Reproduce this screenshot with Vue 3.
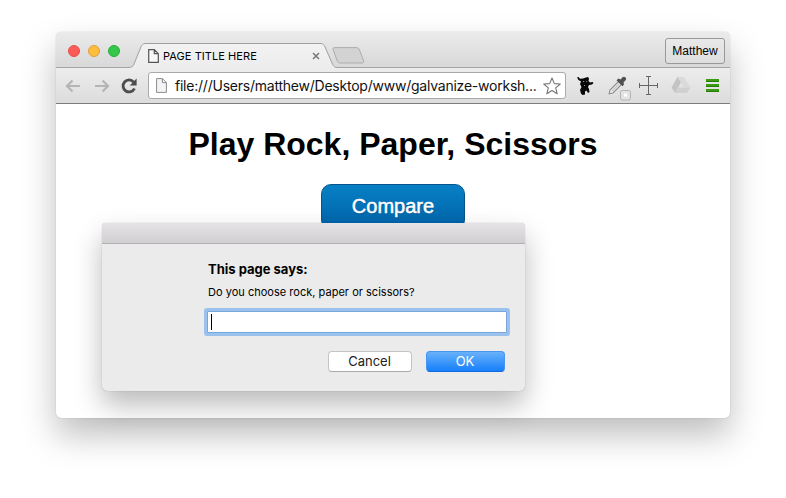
<script setup>
import { ref } from 'vue'

const tabTitle = 'PAGE TITLE HERE'
const address = 'file:///Users/matthew/Desktop/www/galvanize-worksh...'
const answer = ref('')
</script>

<template>
  <main class="desktop">
    <section class="window">
      <header class="tab-strip">
        <div class="lights">
          <span class="light red"></span>
          <span class="light yellow"></span>
          <span class="light green"></span>
        </div>
        <div class="tab">
          <svg class="tab-shape" width="212" height="25" viewBox="0 0 212 25">
            <defs>
              <linearGradient id="tabFill" x1="0" y1="0" x2="0" y2="1">
                <stop offset="0" stop-color="#f2f2f2" />
                <stop offset="1" stop-color="#ededed" />
              </linearGradient>
            </defs>
            <path d="M0 25V24.5C4 24.3 5 23.5 6 21L12.500 5C14 1.500 15 .5 18 .5H192C195 .5 196 1.500 197.500 5L204 20C205.500 23.500 206.500 24.500 210 24.500V25Z" fill="url(#tabFill)" />
            <path d="M0 24.5C4 24.3 5 23.5 6 21L12.500 5C14 1.500 15 .5 18 .5H192C195 .5 196 1.500 197.500 5L204 20C205.500 23.500 206.500 24.500 210 24.500" fill="none" stroke="#a0a0a0" />
          </svg>
          <svg class="tab-page" width="11" height="14" viewBox="0 0 11 14">
            <path d="M.7.7H6.300L10.300 4.700V13.300H.7ZM6.300.7V4.700H10.300" fill="#f8f8f8" stroke="#555" stroke-width="1.200" />
          </svg>
          <span class="tab-title">{{ tabTitle }}</span>
          <svg class="tab-close" width="8" height="8" viewBox="0 0 8 8">
            <path d="M1 1L7 7M7 1L1 7" stroke="#777" stroke-width="1.500" />
          </svg>
        </div>
        <svg class="new-tab" width="34" height="17" viewBox="0 0 34 17">
          <path d="M3 .6H24C26 .6 26.800 1.200 27.500 3L31.300 13C32 15 31.700 16 30 16H9C7 16 6 15.500 5.300 14L1.200 3C.6 1.300 1 .6 3 .6Z" fill="#d3d3d3" stroke="#adadad" />
        </svg>
        <button class="profile">Matthew</button>
      </header>

      <nav class="toolbar">
        <svg class="back" width="16" height="14" viewBox="0 0 16 14">
          <path d="M15 7H2M7.500 1.500L2 7L7.500 12.500" fill="none" stroke="#b5b5b5" stroke-width="2.200" />
        </svg>
        <svg class="forward" width="16" height="14" viewBox="0 0 16 14">
          <path d="M1 7H14M8.500 1.500L14 7L8.500 12.500" fill="none" stroke="#b5b5b5" stroke-width="2.200" />
        </svg>
        <svg class="reload" width="16" height="16" viewBox="0 0 16 16">
          <path d="M12.600 4A6 6 0 1 0 13.500 10.500" fill="none" stroke="#4d4d4d" stroke-width="2.800" />
          <path d="M15.600.6V7.400H8.800Z" fill="#4d4d4d" />
        </svg>
        <div class="address">
          <svg class="address-page" width="11" height="15" viewBox="0 0 11 15">
            <path d="M.6.600H6.400L10.400 4.600V14.400H.6ZM6.400.6V4.600H10.400" fill="#f4f4f4" stroke="#8b8b8b" />
          </svg>
          <span class="address-text">{{ address }}</span>
          <svg class="star" width="18" height="18" viewBox="0 0 18 18">
            <path d="M9 1L11.300 6.600L17.300 7L12.700 10.900L14.200 16.800L9 13.500L3.800 16.800L5.300 10.900L.7 7L6.700 6.600Z" fill="#fff" stroke="#777" stroke-width="1.100" stroke-linejoin="round" />
          </svg>
        </div>
        <svg class="creature" width="18" height="20" viewBox="0 0 18 20">
          <path d="M0 1.500L1.500 1L3 2.800L6 2.500L9 1.500L11 1L12 2.500L11.500 5L13 6.500L15.500 6L16.500 7L15 8.500L12 9L11 11L12 13L12.500 16L11 17L9.500 14.500L8 15.500L8 18.500L5.500 19L4 17.500L3 14L4.500 11L3 8L4 5.500L1.500 4Z" fill="#080808" />
          <path d="M6 5.500H7.200M9.300 5.500H10.200M7 9.500H8" stroke="#bbb" stroke-width=".8" />
        </svg>
        <svg class="dropper" width="24" height="25" viewBox="0 0 24 25">
          <path d="M1.200 17.800L2 14L10.500 5.500L13.500 8.500L5 17Z" fill="#eee" stroke="#8c8c8c" stroke-width="1.100" />
          <path d="M4 15L11 8" stroke="#c6c6c6" stroke-width="1.300" />
          <path d="M8.500 4.300L10.500 2.500L12.500 3.500L14.500 1.200C16.500-.4 19 1.800 17.800 4L15.500 6.500L16 8.500L14.500 10.200Z" fill="#505050" />
          <rect x="12.500" y="14.500" width="10" height="9.500" rx="1.800" fill="#e3e3e3" stroke="#b3b3b3" />
          <rect x="16" y="17.500" width="3" height="3" fill="#fff" />
        </svg>
        <svg class="crosshair" width="19" height="19" viewBox="0 0 19 19">
          <path d="M9.500 .5V18.500M.5 9.500H18.500M7 .5H12M7 18.500H12M.5 7V12M18.500 7V12" fill="none" stroke="#666" />
        </svg>
        <svg class="drive" width="20" height="17" viewBox="0 0 20 17">
          <path d="M6.500 0H13L8 9L4 16L.5 10.500Z" fill="#c4c4c4" />
          <path d="M6.500 0H13L19.500 10.500H13Z" fill="#dadada" />
          <path d="M7.300 10.500H19.500L16 16H4Z" fill="#d0d0d0" />
        </svg>
        <span class="menu">
          <i></i><i></i><i></i>
        </span>
      </nav>

      <article class="page">
        <h1>Play Rock, Paper, Scissors</h1>
        <button class="compare">Compare</button>
      </article>
    </section>

    <section class="dialog" role="dialog">
      <div class="dialog-bar"></div>
      <div class="dialog-body">
        <strong>This page says:</strong>
        <label for="answer">Do you choose rock, paper or scissors?</label>
        <div class="field">
          <span class="caret"></span>
          <input id="answer" v-model="answer" type="text" />
        </div>
        <div class="actions">
          <button class="cancel">Cancel</button>
          <button class="ok">OK</button>
        </div>
      </div>
    </section>
  </main>
</template>

<style>
body {
  background: #fff;
}
</style>

<style scoped>
* {
  box-sizing: border-box;
}
svg {
  display: block;
  flex: none;
}
button {
  padding: 0;
  margin: 0;
  flex: none;
}
.desktop {
  position: relative;
  width: 786px;
  height: 498px;
  padding: 32px 56px 80px;
  overflow: hidden;
  background: #fff;
  font-family: Inter, "Liberation Sans", sans-serif;
  color: #111;
}
.window {
  width: 674px;
  height: 386px;
  border-radius: 5px;
  background: #fff;
  box-shadow: 0 0 1px rgba(0, 0, 0, 0.35), 0 17px 34px rgba(0, 0, 0, 0.26);
}
.tab-strip {
  display: flex;
  height: 36px;
  border-radius: 5px 5px 0 0;
  border-bottom: 1px solid #a4a4a4;
  background: linear-gradient(#ebebeb, #d8d8d8);
}
.lights {
  display: flex;
  gap: 8px;
  width: 74px;
  padding: 13px 0 0 12px;
}
.light {
  width: 12px;
  height: 12px;
  border-radius: 50%;
}
.red {
  background: #fc5b57;
  border: 1px solid #e2504c;
}
.yellow {
  background: #fdbd3e;
  border: 1px solid #dfa03a;
}
.green {
  background: #34c84a;
  border: 1px solid #26ad38;
}
.tab {
  position: relative;
  display: flex;
  align-items: center;
  width: 202px;
  height: 25px;
  margin-top: 11px;
  padding-left: 18px;
}
.tab-shape {
  position: absolute;
  left: -2px;
  top: 0;
}
.tab-page,
.tab-title,
.tab-close {
  position: relative;
}
.tab-title {
  width: 149px;
  margin-left: 4px;
  font-size: 11px;
  letter-spacing: 0.06px;
  line-height: 14px;
  white-space: nowrap;
  color: #000;
}
.new-tab {
  margin-top: 15px;
}
.profile {
  width: 60px;
  height: 26px;
  margin: 6px 5px 0 auto;
  border: 1px solid #999;
  border-radius: 3px;
  background: linear-gradient(#e9e9e9, #dedede);
  font: 12px/25px "Liberation Sans", sans-serif;
  color: #000;
}
.toolbar {
  display: flex;
  align-items: center;
  height: 36px;
  padding-left: 9px;
  border-bottom: 1px solid #7d7d7d;
  background: linear-gradient(#ededed, #dcdcdc);
}
.forward {
  margin-left: 13px;
}
.reload {
  margin-left: 11px;
}
.address {
  display: flex;
  align-items: center;
  width: 418px;
  height: 27px;
  margin-left: 11px;
  padding-left: 7px;
  border: 1px solid #aaa;
  border-radius: 3px;
  background: #fff;
}
.address-text {
  width: 368px;
  margin-left: 8px;
  font-size: 14px;
  letter-spacing: -0.23px;
  line-height: 20px;
  white-space: nowrap;
}
.creature {
  margin-left: 11px;
}
.dropper {
  margin: 5px 0 0 13px;
}
.crosshair {
  margin-left: 7px;
}
.drive {
  margin-left: 13px;
}
.menu {
  display: flex;
  flex-direction: column;
  gap: 2px;
  margin-left: 15px;
}
.menu i {
  width: 13px;
  height: 3px;
  background: #3b9b13;
  border-bottom: 1px solid #287e05;
}
.page {
  display: flex;
  flex-direction: column;
  align-items: center;
  padding-top: 20px;
}
h1 {
  margin: 0;
  font: bold 32px/40px "Liberation Sans", sans-serif;
  color: #000;
  white-space: nowrap;
}
.compare {
  width: 144px;
  height: 46px;
  margin-top: 20px;
  padding-bottom: 2px;
  border: 1px solid #075488;
  border-radius: 10px;
  background: linear-gradient(#0780c5, #0062a8);
  font: 20px/42px "Liberation Sans", sans-serif;
  color: #fff;
  -webkit-text-stroke: 0.5px #fff;
  text-shadow: 0 1px 1px #07548c;
}
.dialog {
  position: absolute;
  left: 102px;
  top: 223px;
  width: 423px;
  height: 168px;
  border-radius: 4px 4px 5px 5px;
  background: #ebebeb;
  box-shadow: 0 0 1px rgba(0, 0, 0, 0.35), 0 14px 28px rgba(0, 0, 0, 0.27);
}
.dialog-bar {
  height: 21px;
  border-bottom: 1px solid #b3b0b3;
  border-radius: 4px 4px 0 0;
  background: linear-gradient(#e5e3e5, #d1cfd1);
}
.dialog-body {
  display: flex;
  flex-direction: column;
  padding: 16px 0 0 106px;
}
strong {
  font-size: 13px;
  line-height: 18px;
  color: #000;
}
label {
  margin-top: 6px;
  font-size: 11px;
  letter-spacing: 0.02px;
  line-height: 16px;
  color: #000;
}
.field {
  display: flex;
  align-items: center;
  width: 300px;
  height: 22px;
  margin: 11px 0 0 -1px;
  padding-left: 3px;
  border: 1px solid #7aa7db;
  background: #fff;
  box-shadow: 0 0 0 3px #9bc2ee;
  border-radius: 1px;
}
.caret {
  width: 1px;
  height: 16px;
  background: #000;
}
input {
  flex: 1;
  min-width: 0;
  height: 18px;
  padding: 0;
  border: 0;
  outline: 0;
  background: transparent;
}
.actions {
  display: flex;
  gap: 14px;
  margin: 18px 0 0 120px;
}
.actions button {
  height: 21px;
  border-radius: 4px;
  font: 13px/19px Inter, "Liberation Sans", sans-serif;
}
.actions .cancel {
  width: 84px;
  padding-right: 1px;
  border: 1px solid #c4c4c4;
  border-bottom-color: #aaa;
  background: #fff;
  color: #222;
}
.actions .ok {
  width: 79px;
  padding-right: 1px;
  border: 1px solid #4695ee;
  border-bottom-color: #1469dc;
  background: linear-gradient(#69b1fa, #1680fc);
  color: #fff;
}
</style>
